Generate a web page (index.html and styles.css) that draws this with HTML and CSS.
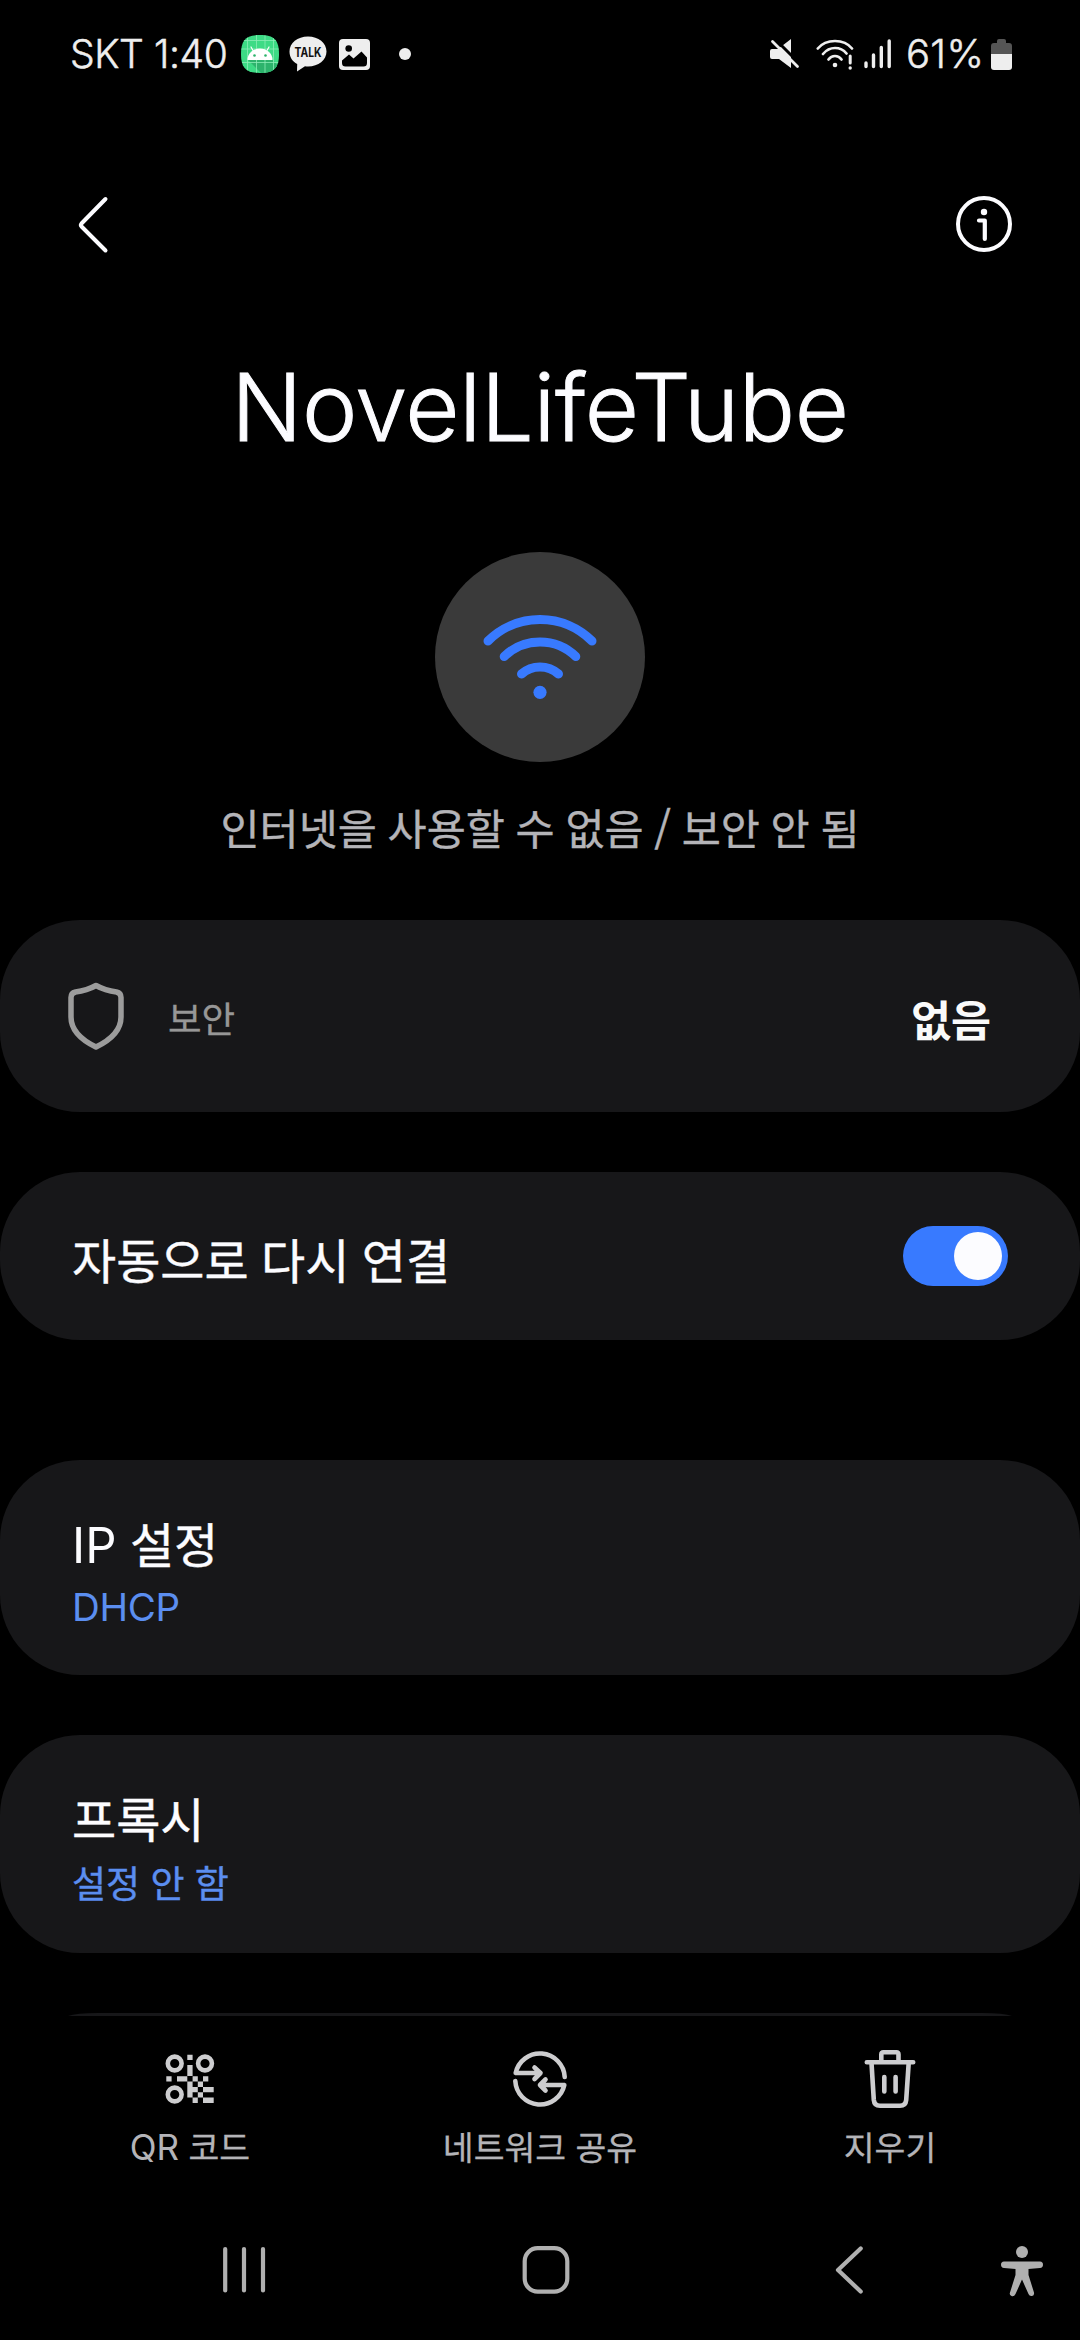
FILE: index.html
```html
<!DOCTYPE html>
<html lang="ko">
<head>
<meta charset="utf-8">
<title>NovelLifeTube</title>
<link rel="stylesheet" href="styles.css">
</head>
<body>
<div class="screen">
  <header class="status">
    <span class="carrier">SKT 1:40</span>
    <svg class="st-android" width="38" height="38" viewBox="0 0 38 38"><defs><clipPath id="sq"><path d="M19 0C33 0 38 5 38 19S33 38 19 38 0 33 0 19 5 0 19 0Z"/></clipPath></defs><g clip-path="url(#sq)"><rect width="38" height="38" fill="#3ddb85"/><path d="M7 25L20 38H38V32L31 24Z" fill="#2db36c"/><path d="M6.500 0V38M15.500 0V38M24 0V38M32.500 0V38M0 5.500H38M0 14H38M0 27.500H38" stroke="#8cecb6" stroke-width=".8"/></g><path d="M6.500 25a12.500 11.500 0 0 1 25 0Z" fill="#fff"/><path d="M12 15.500l-2-3.500M26 15.500l2-3.500" stroke="#fff" stroke-width="1.200" stroke-linecap="round"/><circle cx="13.500" cy="20.500" r="1.300" fill="#2db36c"/><circle cx="24.500" cy="20.500" r="1.300" fill="#2db36c"/></svg>
    <svg class="st-talk" width="38" height="36" viewBox="0 0 38 36"><path d="M19 .5C29.500.5 37.500 7 37.500 15.500S29.500 30.500 19 30.500q-1.500 0-3-.2L8 35.500l.2-7.500C3.500 25.500.5 21 .5 15.500.5 7 8.500.5 19 .5Z" fill="#eee"/><text x="19" y="20.500" text-anchor="middle" textLength="27" lengthAdjust="spacingAndGlyphs" class="talk-word">TALK</text></svg>
    <svg class="st-pic" width="31" height="31" viewBox="0 0 31 31"><rect width="31" height="31" rx="4" fill="#eee"/><circle cx="9.700" cy="9.500" r="3.300" fill="#000"/><path d="M3 21.500L10 15.500 14.500 19.500 22.500 12.500 28 18.500V24Q28 27.500 24.500 27.500H6.500Q3 27.500 3 24Z" fill="#000"/></svg>
    <span class="st-dot"></span>
    <svg class="st-mute" width="30" height="30" viewBox="0 0 30 30"><path d="M2 10H8L21 0V29L9 20H2Q0 20 0 18V12Q0 10 2 10Z" fill="#eee"/><path d="M4 -1L30.500 25.500" stroke="#000" stroke-width="3"/><path d="M2.500 2.500L27.500 27.500" stroke="#eee" stroke-width="2.800" stroke-linecap="round"/></svg>
    <svg class="st-wifi" width="38" height="31" viewBox="0 0 38 31" fill="none" stroke="#eee" stroke-width="2.700" stroke-linecap="round"><path d="M1.800 9.500Q8 2 19 2T36 9.500M7 15Q12 9 19 9T30.500 14.500M12.500 20.500Q15 17 19 17T25.500 20.500"/><circle cx="19" cy="26" r="2.300" fill="#eee" stroke="none"/><path d="M34.200 17V24" stroke-width="3"/><circle cx="34.200" cy="29" r="1.700" fill="#eee" stroke="none"/></svg>
    <svg class="st-signal" width="28" height="30" viewBox="0 0 28 30" stroke="#eee" stroke-width="3.400" stroke-linecap="round"><path d="M2 24V27.500M9.500 16V27.500M17.300 8.500V27.500M25.200 2V27.500"/></svg>
    <span class="percent">61%</span>
    <svg class="st-batt" width="21" height="31" viewBox="0 0 21 31"><path d="M0 15V7Q0 4 3 4H6V2Q6 0 8 0H13Q15 0 15 2V4H18Q21 4 21 7V15Z" fill="#555"/><path d="M0 15H21V28Q21 31 18 31H3Q0 31 0 28Z" fill="#eee"/></svg>
  </header>

  <nav class="appbar">
    <svg width="32" height="58" viewBox="0 0 32 58" fill="none" stroke="#fcfcff" stroke-width="4" stroke-linecap="round" stroke-linejoin="round"><path d="M28.500 3L4.500 27.500Q3.200 29 4.500 30.500L28.500 54.500"/></svg>
    <svg width="56" height="56" viewBox="0 0 56 56" fill="none" stroke="#fcfcff"><circle cx="28" cy="28" r="26" stroke-width="4"/><circle cx="28" cy="16" r="3.200" fill="#fcfcff" stroke="none"/><path d="M23 24.500H28.800V43" stroke-width="4.200" stroke-linecap="round" stroke-linejoin="round"/></svg>
  </nav>

  <h1 class="title">NovelLifeTube</h1>

  <section class="hero">
    <svg width="210" height="210" viewBox="435 552 210 210"><circle cx="540" cy="657" r="105" fill="#3a3a3a"/><g fill="none" stroke="#387aff" stroke-width="9" stroke-linecap="round"><path d="M488 641A73.600 73.600 0 0 1 592 641M504.200 656.500A51.400 51.400 0 0 1 575.800 656.500M521.500 674A28 28 0 0 1 558.500 674"/></g><circle cx="540" cy="692.300" r="6.600" fill="#387aff"/></svg>
    <p class="state">인터넷을 사용할 수 없음 / 보안 안 됨</p>
  </section>

  <main class="cards">
    <section class="card security">
      <svg width="56" height="68" viewBox="0 0 56 68" fill="none" stroke="#9c9c9c" stroke-width="5.500" stroke-linejoin="round"><path d="M28 3.500Q37 8.500 48.500 10Q53 11 53 15.500V35Q53 53 28 65Q3 53 3 35V15.500Q3 11 7.500 10Q19 8.500 28 3.500Z"/></svg>
      <span class="sec-label">보안</span>
      <strong class="sec-value">없음</strong>
    </section>
    <section class="card reconnect">
      <span class="row-title">자동으로 다시 연결</span>
      <span class="switch"><span class="thumb"></span></span>
    </section>
    <section class="card ip">
      <span class="row-title"><span class="latin">IP</span> 설정</span>
      <span class="row-sub latin-sub">DHCP</span>
    </section>
    <section class="card proxy">
      <span class="row-title">프록시</span>
      <span class="row-sub">설정 안 함</span>
    </section>
    <svg class="peek" width="1080" height="3" viewBox="0 0 1080 3"><path d="M68 3Q76 0 98 0H982Q1004 0 1012 3Z" fill="#171719"/></svg>
  </main>

  <footer class="actions">
    <div class="action">
      <svg width="60" height="60" viewBox="160 2049 60 60"><g fill="none" stroke="#cdcdcf" stroke-width="4.600"><circle cx="174.700" cy="2063.500" r="6.900"/><circle cx="205" cy="2063.500" r="6.900"/><circle cx="174.700" cy="2094.500" r="6.900"/></g><path fill="#cdcdcf" d="M187.300 2054.700h5.300v5.300h-5.300zM187.300 2065h5.300v11h-5.300zM166.300 2076.300h5.300v5.300h-5.300zM177 2076.300h10.300v5.300H177zM192.600 2076.300h5.200v5.300h-5.200zM203 2076.300h5.300v5.300H203zM187.300 2081.600h5.300v5.400h-5.300zM197.800 2081.600h5.200v5.400h-5.200zM187.300 2087h10.500v5.300h-10.500zM203 2087h10.700v5.300H203zM187.300 2092.300h5.300v5.300h-5.300zM197.800 2092.300h5.200v5.300h-5.200zM192.600 2097.600h5.200v5.400h-5.200zM203 2097.600h10.700v5.400H203z"/></svg>
      <span class="action-label"><span class="latin-sm">QR</span> 코드</span>
    </div>
    <div class="action">
      <svg width="60" height="60" viewBox="510 2049 60 60" fill="none" stroke="#cdcdcf" stroke-width="4.600" stroke-linecap="round" stroke-linejoin="round"><path d="M564.700 2077A24.800 24.800 0 0 0 515.700 2073H540.500M534.500 2067.500L540.500 2073L534.500 2079"/><path d="M515.300 2081A24.800 24.800 0 0 0 564.300 2085H540M545.500 2079.500L540 2085L545.500 2090.500"/></svg>
      <span class="action-label">네트워크 공유</span>
    </div>
    <div class="action">
      <svg width="60" height="60" viewBox="860 2049 60 60" fill="none" stroke="#cdcdcf" stroke-width="4.600" stroke-linecap="round" stroke-linejoin="round"><path d="M866.800 2062.200H913.200M881.300 2062V2054.500Q881.300 2052.300 883.500 2052.300H896.300Q898.500 2052.300 898.500 2054.500V2062M871.500 2063L873.800 2100Q874.300 2105.700 880 2105.700H900Q905.700 2105.700 906.200 2100L908.700 2063M884.300 2077V2091.500M895.600 2077V2091.500"/></svg>
      <span class="action-label">지우기</span>
    </div>
  </footer>

  <nav class="navbar">
    <svg class="nav-recents" width="44" height="50" viewBox="222 2245 44 50" stroke="#b0b0b0" stroke-width="4.200" stroke-linecap="round"><path d="M225.200 2249V2290.500M244 2249V2290.500M263 2249V2290.500"/></svg>
    <svg class="nav-home" width="50" height="50" viewBox="521 2245 50 50" fill="none"><rect x="524.700" y="2248.200" width="42.600" height="43.400" rx="13" stroke="#b0b0b0" stroke-width="4.200"/></svg>
    <svg class="nav-back" width="34" height="50" viewBox="832 2245 34 50" fill="none" stroke="#b0b0b0" stroke-width="4.200" stroke-linecap="round" stroke-linejoin="round"><path d="M860.700 2248.500L838 2270L860.700 2291.500"/></svg>
    <svg class="nav-access" width="44" height="52" viewBox="1000 2245 44 52" fill="#b0b0b0"><circle cx="1022" cy="2252" r="6"/><path d="M1004 2261.500H1040Q1043 2261.700 1043 2264.700T1040 2268L1028.500 2269V2275L1034 2292.500Q1034.500 2295.500 1032 2296T1028.500 2294L1022 2279.500L1015.500 2294Q1014 2297 1011.500 2296T1010 2292.500L1015.500 2275V2269L1004 2268Q1001 2267.700 1001 2264.700T1004 2261.500Z"/></svg>
  </nav>
</div>
</body>
</html>
```

FILE: styles.css
```css
* { box-sizing: border-box; margin: 0; padding: 0; }
body { background: #000; color: #fcfcff; font-family: "Noto Sans CJK KR", sans-serif; }
svg { display: block; flex: none; }
.screen { width: 1080px; height: 2340px; background: #000; overflow: hidden; display: flex; flex-direction: column; }

.status { height: 108px; padding-left: 70px; display: flex; align-items: center; color: #eee; font-family: Inter, sans-serif; white-space: nowrap; }
.carrier { width: 171px; font-size: 39px; line-height: 46px; font-weight: 300; letter-spacing: -.4px; -webkit-text-stroke: .5px; }
.st-talk { margin-left: 10px; }
.talk-word { font: 700 13px Inter, sans-serif; fill: #111; }
.st-pic { margin-left: 12px; }
.st-dot { width: 12px; height: 12px; margin-left: 29px; border-radius: 50%; background: #eee; }
.st-mute { margin-left: 359px; }
.st-wifi { margin-left: 16px; }
.st-signal { margin-left: 10px; }
.percent { width: 78px; margin-left: 14px; font-size: 40px; line-height: 46px; font-weight: 300; letter-spacing: .3px; -webkit-text-stroke: .5px; }
.st-batt { margin-left: 7px; }

.appbar { height: 234px; padding: 88px 68px 0 77px; display: flex; justify-content: space-between; align-items: flex-start; }

.title { height: 130px; font-family: Inter, sans-serif; font-size: 93.500px; line-height: 130px; font-weight: 300; text-align: center; letter-spacing: -.2px; -webkit-text-stroke: 1px; }
.hero { height: 448px; padding-top: 80px; display: flex; flex-direction: column; align-items: center; }
.state { margin-top: 33px; font-size: 42.500px; line-height: 64px; color: #b4b4b8; word-spacing: -1.200px; white-space: nowrap; -webkit-text-stroke: .4px; }

.cards { height: 1096px; display: flex; flex-direction: column; flex: none; }
.card { flex: none; background: #171719; border-radius: 80px; display: flex; white-space: nowrap; }
.security { height: 192px; padding: 0 89px 0 68px; align-items: center; }
.sec-label { margin-left: 44px; padding-top: 4px; font-size: 36.500px; line-height: 54px; color: #979797; -webkit-text-stroke: .3px; }
.sec-value { margin-left: auto; padding-top: 6px; font-size: 43.500px; line-height: 60px; font-weight: 700; color: #fafafa; }
.reconnect { height: 168px; margin-top: 60px; padding: 0 72px; align-items: center; justify-content: space-between; }
.row-title { font-size: 48px; line-height: 64px; font-weight: 400; word-spacing: -1px; -webkit-text-stroke: .4px; }
.reconnect .row-title { padding-top: 3px; }
.latin { margin-right: 1px; font-family: Inter, sans-serif; font-size: 49px; font-weight: 400; -webkit-text-stroke: 0; }
.row-sub { margin-top: 7px; font-size: 37px; line-height: 52px; color: #5b8ef0; -webkit-text-stroke: .4px; }
.latin-sub { margin-top: 3px; font-family: Inter, sans-serif; font-size: 38.500px; letter-spacing: -.3px; -webkit-text-stroke: 0; }
.switch { width: 105px; height: 60px; padding: 6px; border-radius: 30px; background: #387aff; display: flex; justify-content: flex-end; }
.thumb { width: 48px; height: 48px; border-radius: 50%; background: #fcfcff; }
.ip { height: 215px; margin-top: 120px; padding: 50px 72px 0; flex-direction: column; }
.proxy { height: 218px; margin-top: 60px; padding: 50px 72px 0; flex-direction: column; }
.peek { margin-top: 60px; }

.actions { height: 184px; padding: 33px 15px 0; display: grid; grid-template-columns: repeat(3, 350px); flex: none; }
.action { display: flex; flex-direction: column; align-items: center; }
.action-label { margin-top: 13px; font-size: 33.500px; line-height: 48px; color: #b4b4b8; white-space: nowrap; -webkit-text-stroke: .3px; }
.latin-sm { font-family: Inter, sans-serif; font-size: 35px; font-weight: 400; -webkit-text-stroke: 0; }

.navbar { height: 140px; padding: 45px 0 0 222px; display: flex; flex: none; }
.nav-home { margin-left: 255px; }
.nav-back { margin-left: 261px; }
.nav-access { margin-left: 134px; }
```
